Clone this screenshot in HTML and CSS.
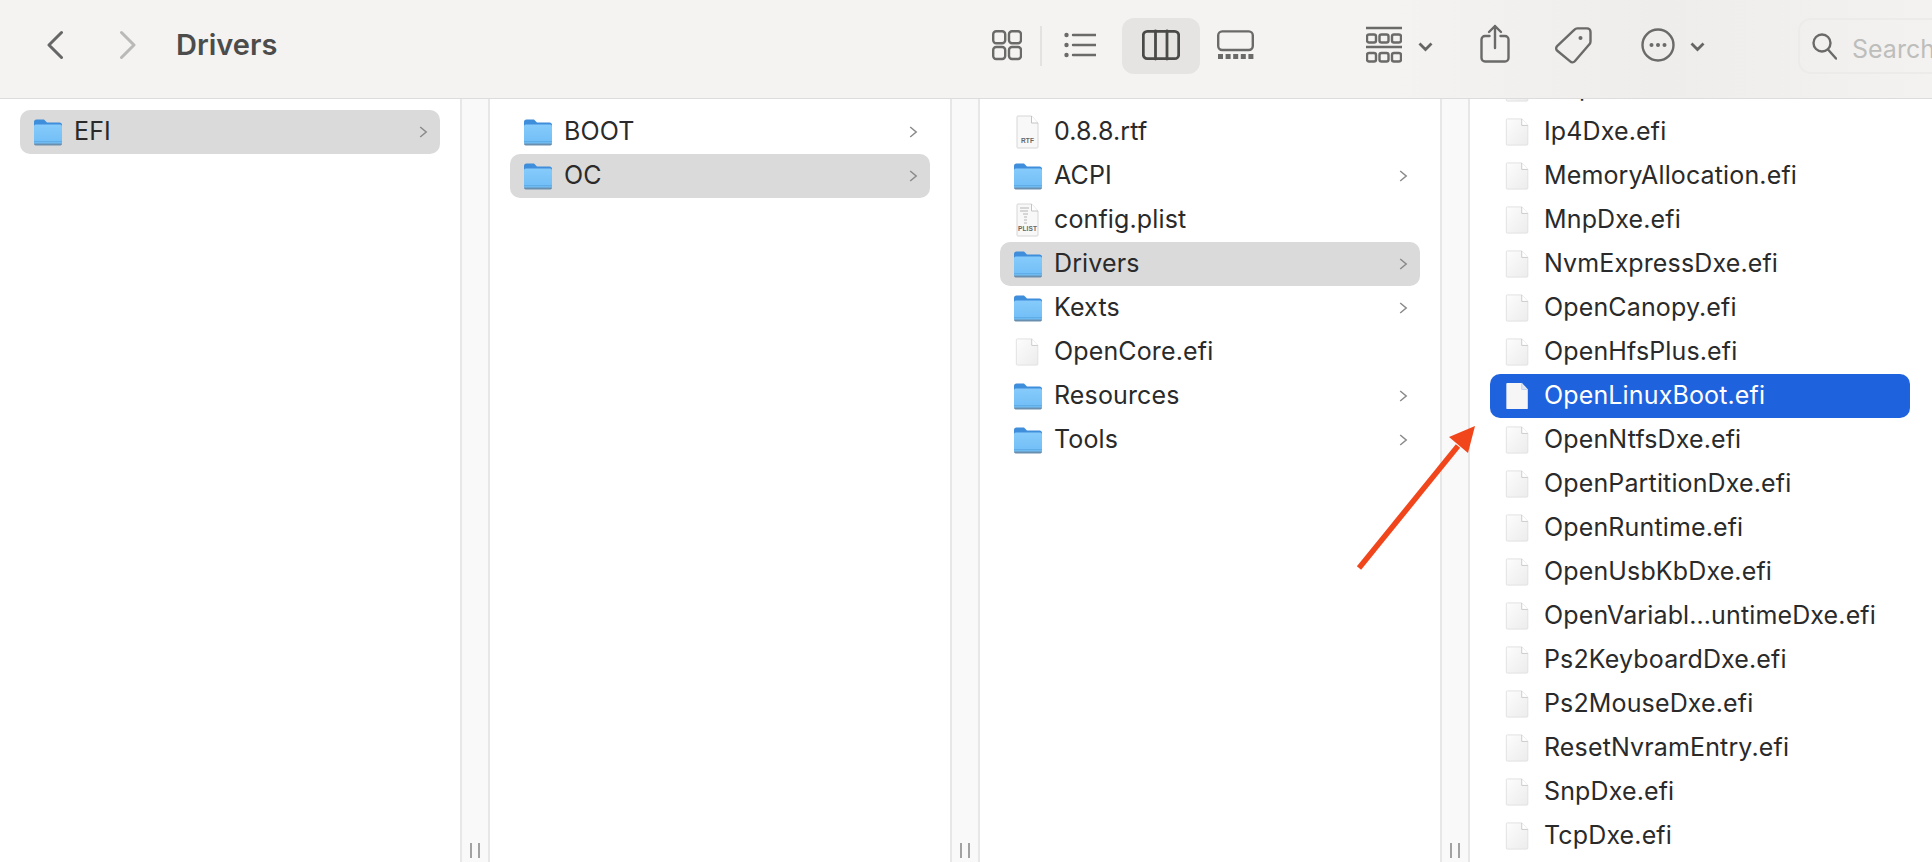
FILE: index.html
```html
<!DOCTYPE html>
<html lang="en">
<head>
<meta charset="utf-8">
<title>Drivers</title>
<link rel="stylesheet" href="styles.css">
</head>
<body>
<svg class="sprite" aria-hidden="true">
  <defs>
    <linearGradient id="folderFront" x1="0" y1="0" x2="0" y2="1"><stop offset="0" stop-color="#86cbfb"/><stop offset="1" stop-color="#6fbdf6"/></linearGradient>
    <linearGradient id="fileFill" x1="0" y1="0" x2="1" y2="1"><stop offset="0" stop-color="#fdfdfd"/><stop offset="1" stop-color="#ececec"/></linearGradient>
    <symbol id="folder" viewBox="0 0 30 28">
      <path d="M1 4a2.5 2.5 0 0 1 2.5-2.5h7.5l3 3h12.5a2.5 2.5 0 0 1 2.5 2.500v8H1z" fill="#3e8edb"/>
      <rect x="1" y="6.500" width="28" height="20" rx="1.800" fill="url(#folderFront)"/>
      <rect x="1" y="23.200" width="28" height="1" fill="#5ea9e4"/>
      <path d="M1 25.600h28v.4a1.600 1.600 0 0 1-1.600 1.400H2.600A1.600 1.600 0 0 1 1 26z" fill="#6a8fae"/>
    </symbol>
    <symbol id="file" viewBox="0 0 26 30">
      <path d="M.5 2a1 1 0 0 1 1-1H17l6.500 7v20a1 1 0 0 1-1 1h-21a1 1 0 0 1-1-1z" fill="url(#fileFill)" stroke="#e0e0e0"/>
      <path d="M17 1v7h6.500" fill="#fff" stroke="#c9c9c9"/>
    </symbol>
    <symbol id="file-white" viewBox="0 0 26 30">
      <path d="M.5 2a1 1 0 0 1 1-1H17l6.500 7v20a1 1 0 0 1-1 1h-21a1 1 0 0 1-1-1z" fill="#f6f6f6"/>
      <path d="M17 1v7h6.500" fill="#dfe6f4" stroke="#bcd0f0"/>
    </symbol>
    <symbol id="rtf" viewBox="0 0 26 34">
      <path d="M2 2a1 1 0 0 1 1-1h13.500l6.500 7v24a1 1 0 0 1-1 1H3a1 1 0 0 1-1-1z" fill="#f8f8f8" stroke="#d6d6d6"/>
      <path d="M16.500 1v7H23" fill="#fff" stroke="#c4c4c4"/>
      <text class="badge" x="12.500" y="27.500" text-anchor="middle">RTF</text>
    </symbol>
    <symbol id="plist" viewBox="0 0 26 34">
      <path d="M2 2a1 1 0 0 1 1-1h13.500l6.500 7v24a1 1 0 0 1-1 1H3a1 1 0 0 1-1-1z" fill="#f8f8f8" stroke="#d6d6d6"/>
      <path d="M16.500 1v7H23" fill="#fff" stroke="#c4c4c4"/>
      <path d="M5 5h9M5 8h8M8 11h5M9 14h3M9 17h3M9 20h3" stroke="#b4b4b4" fill="none"/>
      <text class="badge" x="12.500" y="28" text-anchor="middle">PLIST</text>
    </symbol>
    <symbol id="disclosure" viewBox="0 0 9 12">
      <path d="M1.200 1l6 5-6 5" fill="none" stroke="#8a8a8a" stroke-width="1.500"/>
    </symbol>
    <symbol id="drop" viewBox="0 0 15 56">
      <path d="M1.500 25.500l6 6 6-6" fill="none" stroke="#656563" stroke-width="2.800"/>
    </symbol>
  </defs>
</svg>

<header class="toolbar">
  <div class="nav">
    <svg class="tool w-back" viewBox="0 0 16 56"><path class="ink-strong" d="M14.500 14.500L2 27l12.500 12.500"/></svg>
    <svg class="tool w-forward" viewBox="0 0 16 56"><path class="ink-off" d="M1.500 14.500L14 27 1.500 39.500"/></svg>
    <h1 class="title">Drivers</h1>
  </div>
  <div class="tools">
    <svg class="tool w-grid" viewBox="0 0 30 56"><g class="ink"><rect x="1.200" y="13.200" width="12" height="12" rx="3"/><rect x="17" y="13.200" width="12" height="12" rx="3"/><rect x="1.200" y="29" width="12" height="12" rx="3"/><rect x="17" y="29" width="12" height="12" rx="3"/></g></svg>
    <span class="divider"></span>
    <svg class="tool w-list" viewBox="0 0 32 56"><g class="ink"><path d="M9 17h23M9 27h23M9 37h23"/></g><g class="dots"><circle cx="2.500" cy="17" r="2.200"/><circle cx="2.500" cy="27" r="2.200"/><circle cx="2.500" cy="37" r="2.200"/></g></svg>
    <div class="view-active">
      <svg class="tool w-columns" viewBox="0 0 38 56"><g class="ink-dark"><rect x="1.300" y="13.300" width="35.400" height="27.400" rx="4"/><path d="M13.500 13v28M25 13v28"/></g></svg>
    </div>
    <svg class="tool w-gallery" viewBox="0 0 37 56"><g class="ink"><rect x="1.200" y="13.400" width="34.600" height="18.600" rx="4"/></g><g class="dots"><rect x="1" y="36" width="5" height="5"/><rect x="8.600" y="36" width="5" height="5"/><rect x="16.200" y="36" width="5" height="5"/><rect x="23.800" y="36" width="5" height="5"/><rect x="31.400" y="36" width="5" height="5"/></g></svg>
    <svg class="tool w-group" viewBox="0 0 36 56"><g class="ink"><path d="M0 10h36M0 29h36"/><rect x="1" y="16.500" width="9" height="8" rx="2"/><rect x="13.500" y="16.500" width="9" height="8" rx="2"/><rect x="26" y="16.500" width="9" height="8" rx="2"/><rect x="1" y="35" width="9" height="8.500" rx="2"/><rect x="13.500" y="35" width="9" height="8.500" rx="2"/><rect x="26" y="35" width="9" height="8.500" rx="2"/></g></svg>
    <svg class="tool w-drop gap-drop"><use href="#drop"/></svg>
    <svg class="tool w-share" viewBox="0 0 30 56"><g class="ink"><path d="M9.500 18H5a3.500 3.500 0 0 0-3.500 3.500V40A3.500 3.500 0 0 0 5 43.500h20a3.500 3.500 0 0 0 3.500-3.500V21.500A3.500 3.500 0 0 0 25 18h-4.500"/><path d="M15 30V8M9 14l6-6 6 6"/></g></svg>
    <svg class="tool w-tag" viewBox="0 0 37 56"><g class="ink"><path d="M19.500 11.600a4 4 0 0 1 2.800-1.200H32a3.500 3.500 0 0 1 3.500 3.500v9.700a4 4 0 0 1-1.100 2.700L19.800 43.300a3.200 3.200 0 0 1-4.600.1L2.300 32.800a3.200 3.200 0 0 1-.2-4.700z"/></g><circle class="dots" cx="25.500" cy="20" r="2"/></svg>
    <svg class="tool w-more" viewBox="0 0 34 56"><circle class="ink" cx="17" cy="27" r="15.500"/><g class="dots"><circle cx="10.500" cy="27" r="2"/><circle cx="17" cy="27" r="2"/><circle cx="23.500" cy="27" r="2"/></g></svg>
    <svg class="tool w-drop gap-drop-more"><use href="#drop"/></svg>
    <div class="search">
      <svg class="search-icon" viewBox="0 0 25 27"><g class="ink"><circle cx="10" cy="10" r="8.500"/><path d="M16 16.500l8 9"/></g></svg>
      <span class="search-text">Search</span>
    </div>
  </div>
</header>

<main class="browser">
  <section class="column">
    <ul class="list">
      <li class="row current"><svg class="icon"><use href="#folder"/></svg><span class="name">EFI</span><svg class="chevron"><use href="#disclosure"/></svg></li>
    </ul>
    <div class="resizer"><i></i><i></i></div>
  </section>
  <section class="column">
    <ul class="list">
      <li class="row"><svg class="icon"><use href="#folder"/></svg><span class="name">BOOT</span><svg class="chevron"><use href="#disclosure"/></svg></li>
      <li class="row current"><svg class="icon"><use href="#folder"/></svg><span class="name">OC</span><svg class="chevron"><use href="#disclosure"/></svg></li>
    </ul>
    <div class="resizer"><i></i><i></i></div>
  </section>
  <section class="column">
    <ul class="list">
      <li class="row"><svg class="icon tall"><use href="#rtf"/></svg><span class="name">0.8.8.rtf</span></li>
      <li class="row"><svg class="icon"><use href="#folder"/></svg><span class="name">ACPI</span><svg class="chevron"><use href="#disclosure"/></svg></li>
      <li class="row"><svg class="icon tall"><use href="#plist"/></svg><span class="name">config.plist</span></li>
      <li class="row current"><svg class="icon"><use href="#folder"/></svg><span class="name">Drivers</span><svg class="chevron"><use href="#disclosure"/></svg></li>
      <li class="row"><svg class="icon"><use href="#folder"/></svg><span class="name">Kexts</span><svg class="chevron"><use href="#disclosure"/></svg></li>
      <li class="row"><svg class="icon"><use href="#file"/></svg><span class="name">OpenCore.efi</span></li>
      <li class="row"><svg class="icon"><use href="#folder"/></svg><span class="name">Resources</span><svg class="chevron"><use href="#disclosure"/></svg></li>
      <li class="row"><svg class="icon"><use href="#folder"/></svg><span class="name">Tools</span><svg class="chevron"><use href="#disclosure"/></svg></li>
    </ul>
    <div class="resizer"><i></i><i></i></div>
  </section>
  <section class="column">
    <ul class="list scrolled">
      <li class="row"><svg class="icon"><use href="#file"/></svg><span class="name">HttpDxe.efi</span></li>
      <li class="row"><svg class="icon"><use href="#file"/></svg><span class="name">Ip4Dxe.efi</span></li>
      <li class="row"><svg class="icon"><use href="#file"/></svg><span class="name">MemoryAllocation.efi</span></li>
      <li class="row"><svg class="icon"><use href="#file"/></svg><span class="name">MnpDxe.efi</span></li>
      <li class="row"><svg class="icon"><use href="#file"/></svg><span class="name">NvmExpressDxe.efi</span></li>
      <li class="row"><svg class="icon"><use href="#file"/></svg><span class="name">OpenCanopy.efi</span></li>
      <li class="row"><svg class="icon"><use href="#file"/></svg><span class="name">OpenHfsPlus.efi</span></li>
      <li class="row selected"><svg class="icon"><use href="#file-white"/></svg><span class="name">OpenLinuxBoot.efi</span></li>
      <li class="row"><svg class="icon"><use href="#file"/></svg><span class="name">OpenNtfsDxe.efi</span></li>
      <li class="row"><svg class="icon"><use href="#file"/></svg><span class="name">OpenPartitionDxe.efi</span></li>
      <li class="row"><svg class="icon"><use href="#file"/></svg><span class="name">OpenRuntime.efi</span></li>
      <li class="row"><svg class="icon"><use href="#file"/></svg><span class="name">OpenUsbKbDxe.efi</span></li>
      <li class="row"><svg class="icon"><use href="#file"/></svg><span class="name">OpenVariabl…untimeDxe.efi</span></li>
      <li class="row"><svg class="icon"><use href="#file"/></svg><span class="name">Ps2KeyboardDxe.efi</span></li>
      <li class="row"><svg class="icon"><use href="#file"/></svg><span class="name">Ps2MouseDxe.efi</span></li>
      <li class="row"><svg class="icon"><use href="#file"/></svg><span class="name">ResetNvramEntry.efi</span></li>
      <li class="row"><svg class="icon"><use href="#file"/></svg><span class="name">SnpDxe.efi</span></li>
      <li class="row"><svg class="icon"><use href="#file"/></svg><span class="name">TcpDxe.efi</span></li>
    </ul>
  </section>
  <svg class="annotation" viewBox="0 0 130 150" aria-hidden="true">
    <path d="M4 145L103 23" fill="none" stroke="#f1461c" stroke-width="5.500"/>
    <path d="M120 3L94 14L113 30z" fill="#f1461c"/>
  </svg>
</main>
</body>
</html>
```

FILE: styles.css
```css
* { box-sizing: border-box; }

html, body {
  margin: 0;
  height: 100%;
  overflow: hidden;
  background: #fff;
}

body {
  width: 1932px;
  height: 862px;
  font-family: Inter, "Liberation Sans", sans-serif;
  color: #2a2a2a;
  display: flex;
  flex-direction: column;
}

.sprite { position: absolute; width: 0; height: 0; }

.badge {
  font-family: "Liberation Sans", sans-serif;
  font-size: 6.5px;
  font-weight: 700;
  fill: #666;
}

/* Toolbar */
.toolbar {
  position: relative;
  z-index: 2;
  flex: 0 0 99px;
  display: grid;
  grid-template-columns: 992px 1fr;
  padding-top: 18px;
  background: linear-gradient(to right, #f4f3f1 0, #f4f3f1 72%, #eeedeb 86%, #f3f2f0 100%);
  border-bottom: 1px solid #dcdcdc;
}

.nav, .tools { display: flex; align-items: flex-start; height: 56px; }
.nav { padding-left: 47px; }

.tool { display: block; height: 56px; flex: none; }

.ink, .ink-dark, .ink-strong, .ink-off { fill: none; stroke-linecap: round; stroke-linejoin: round; }
.ink { stroke: #6a6a68; stroke-width: 2.4; }
.ink-dark { stroke: #4a4a48; stroke-width: 2.8; }
.ink-strong { stroke: #666; stroke-width: 3; }
.ink-off { stroke: #b9b9b8; stroke-width: 3; }
.dots { fill: #6a6a68; }

.w-back { width: 16px; }
.w-forward { width: 16px; margin-left: 57px; }

.title {
  margin: 0 0 0 40px;
  font-size: 29px;
  font-weight: 600;
  line-height: 54px;
  color: #4c4c4c;
}

.w-grid { width: 30px; }
.divider { width: 2px; height: 40px; margin: 8px 0 0 18px; background: #e3e2e0; }
.w-list { width: 32px; margin-left: 22px; }

.view-active {
  flex: none;
  width: 78px;
  height: 56px;
  margin-left: 26px;
  display: flex;
  justify-content: center;
  background: #e5e4e2;
  border-radius: 12px;
}
.w-columns { width: 38px; }
.w-gallery { width: 37px; margin-left: 17px; }
.w-group { width: 36px; margin-left: 112px; }
.w-drop { width: 15px; }
.gap-drop { margin-left: 16px; }
.w-share { width: 30px; margin-left: 47px; }
.w-tag { width: 37px; margin-left: 45px; }
.w-more { width: 34px; margin-left: 49px; }
.gap-drop-more { margin-left: 15px; }

.search {
  flex: none;
  width: 180px;
  height: 56px;
  margin-left: 93px;
  padding: 0 0 0 12px;
  display: flex;
  align-items: center;
  gap: 15px;
  border: 2px solid #ecebe9;
  border-radius: 13px;
}
.search-icon { width: 25px; height: 27px; flex: none; }
.search-text { font-size: 25px; line-height: 30px; margin-top: 6px; color: #bdbdbc; white-space: nowrap; }

/* Column browser */
.browser {
  position: relative;
  flex: 1;
  min-height: 0;
  display: grid;
  grid-template-columns: 490px 490px 490px 1fr;
  overflow: hidden;
}

.column { display: flex; min-width: 0; height: 100%; }

.list {
  flex: 1;
  min-width: 0;
  margin: 0;
  padding: 11px 20px 0 20px;
  list-style: none;
}
.list.scrolled { margin-top: -44px; padding-right: 22px; }

.row {
  height: 44px;
  padding: 0 12px 3px 13px;
  display: flex;
  align-items: center;
  border-radius: 10px;
  font-size: 25px;
  letter-spacing: 0.14px;
  white-space: nowrap;
}
.row.current { background: #dadada; }
.row.selected { background: #1f62de; color: #fff; }

.icon { width: 30px; height: 28px; flex: none; margin: 3px 11px 0 0; }
.icon.tall { height: 34px; }

.name { flex: 1; min-width: 0; }

.chevron { width: 9px; height: 12px; flex: none; margin-top: 3px; }

.resizer {
  flex: 0 0 30px;
  display: flex;
  align-items: flex-end;
  justify-content: center;
  gap: 6px;
  padding-bottom: 4px;
  background: #f9f9f9;
  border-left: 2px solid #e7e7e7;
  border-right: 2px solid #e7e7e7;
}
.resizer i { display: block; width: 2px; height: 15px; background: #a2a2a2; }

/* Arrow annotation placed over the columns */
.annotation {
  position: absolute;
  left: 1355px;
  top: 324px;
  width: 130px;
  height: 150px;
}
```
